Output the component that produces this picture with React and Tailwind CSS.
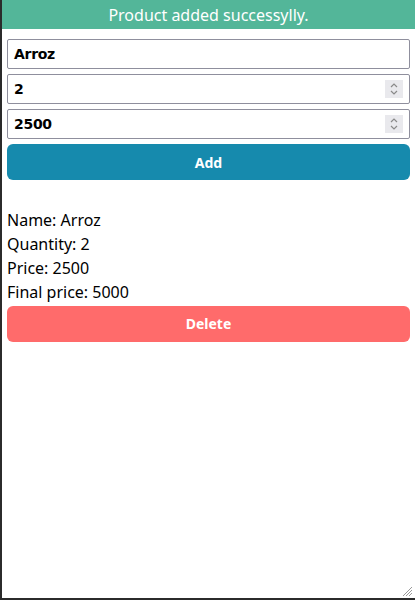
const Spinner = () => (
  <div className="flex h-[18px] w-[18px] flex-col items-center justify-center bg-[#e9e9ed]">
    <svg width="10" height="14" viewBox="0 0 10 14" fill="none" stroke="#8a8a8a" strokeWidth="1.2">
      <path d="M2 5l3-3 3 3" />
      <path d="M2 9l3 3 3-3" />
    </svg>
  </div>
);

const Field = ({ value, number }) => (
  <div className="flex h-[30px] items-center rounded-[2px] border border-[#8f8f9d] bg-white pl-[6px] pr-[6px]">
    <span className="flex-1 text-[14px] font-bold text-black [font-family:'DejaVu_Sans',sans-serif] tracking-[-0.3px]">
      {value}
    </span>
    {number && <Spinner />}
  </div>
);

export default function App() {
  return (
    <div className="relative flex h-[600px] flex-col border-b-2 border-l-2 border-[#2b2b2b] bg-white [font-family:'Noto_Sans',sans-serif]">
      <div className="flex h-[29px] items-center justify-center bg-[#53b699] text-[16px] text-white">
        Product added successylly.
      </div>
      <div className="flex flex-col gap-[5px] px-[5px] pt-[10px]">
        <Field value="Arroz" />
        <Field value="2" number />
        <Field value="2500" number />
        <button className="h-[36px] rounded-[6px] bg-[#168aad] text-[14px] font-bold text-white">
          Add
        </button>
      </div>
      <div className="flex flex-col px-[5px] pt-[28px] text-[16px] leading-[24px] text-black">
        <p>Name: Arroz</p>
        <p>Quantity: 2</p>
        <p>Price: 2500</p>
        <p>Final price: 5000</p>
        <button className="mt-[2px] h-[36px] rounded-[6px] bg-[#ff6b6b] text-[14px] font-bold text-white">
          Delete
        </button>
      </div>
      <svg className="absolute bottom-[1px] right-[2px]" width="11" height="11" viewBox="0 0 11 11" stroke="#9a9a9a" strokeWidth="1">
        <path d="M1 10L10 1M4 10L10 4M7 10L10 7" />
      </svg>
    </div>
  );
}
